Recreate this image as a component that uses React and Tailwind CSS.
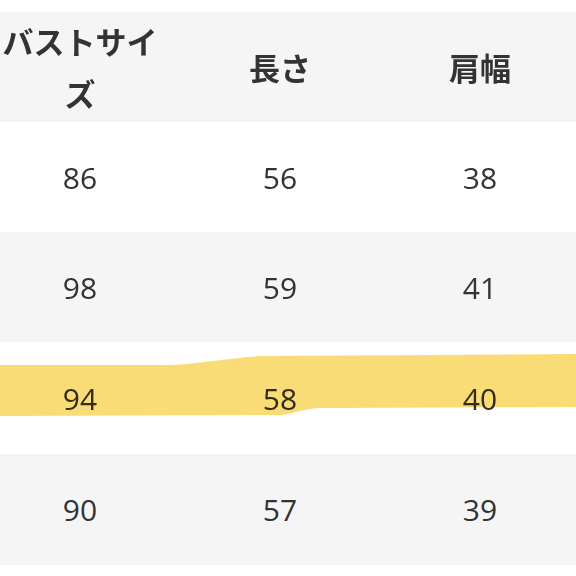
const head = ['バストサイズ', '長さ', '肩幅']

const rows = [
  { cells: ['86', '56', '38'], bg: 'bg-white', h: 'h-[110px]' },
  { cells: ['98', '59', '41'], bg: 'bg-[#f5f5f5]', h: 'h-[110px]' },
  { cells: ['94', '58', '40'], bg: 'bg-white', h: 'h-[112px]', marked: true },
  { cells: ['90', '57', '39'], bg: 'bg-[#f5f5f5]', h: 'h-[111px]' },
]

function Marker() {
  // highlighter stroke drawn over the row
  return (
    <svg
      className="pointer-events-none absolute left-0 top-0 h-full w-[576px] mix-blend-multiply"
      viewBox="0 0 576 112"
      preserveAspectRatio="none"
    >
      <path
        d="M0 23 L170 23 C200 22 230 16 260 14 L576 12 L576 65 L320 66 C300 67 295 72 280 73 L0 74 Z"
        fill="#f9dc76"
      />
    </svg>
  )
}

export default function App() {
  return (
    <div className="h-[576px] w-[576px] overflow-hidden bg-white pt-[12px] text-[#333]">
      <div className="ml-[-20px] grid h-[110px] w-[600px] grid-cols-3 bg-[#f5f5f5] font-['Noto_Sans_CJK_JP',sans-serif] text-[31px] font-bold leading-[52px]">
        {head.map((h) => (
          <div key={h} className="flex items-center justify-center px-4 text-center">
            {h}
          </div>
        ))}
      </div>
      {rows.map((r) => (
        <div key={r.cells[0]} className={`relative ${r.h} ${r.bg}`}>
          <div className="ml-[-20px] grid h-full w-[600px] grid-cols-3 font-['Open_Sans',sans-serif] text-[30px]">
            {r.cells.map((c, i) => (
              <div key={i} className="flex items-center justify-center">
                {c}
              </div>
            ))}
          </div>
          {r.marked && <Marker />}
        </div>
      ))}
    </div>
  )
}
